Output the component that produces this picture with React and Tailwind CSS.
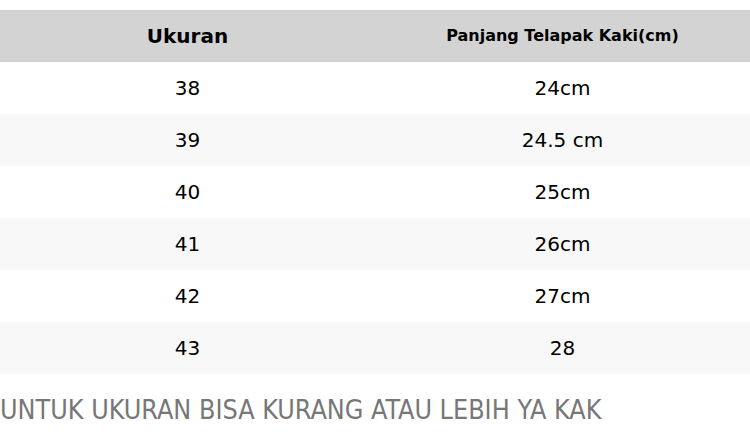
const rows = [
  ['38', '24cm'],
  ['39', '24.5 cm'],
  ['40', '25cm'],
  ['41', '26cm'],
  ['42', '27cm'],
  ['43', '28'],
];

export default function App() {
  return (
    <div className="w-[750px] h-[446px] bg-white text-black" style={{ fontFamily: '"DejaVu Sans", sans-serif' }}>
      <div className="pt-[10px]">
        <div className="grid grid-cols-2 h-[52px] bg-[#d3d3d3] font-bold items-center text-center">
          <div className="text-[20px]">Ukuran</div>
          <div className="text-[16px]">Panjang Telapak Kaki(cm)</div>
        </div>
        {rows.map(([size, len], i) => (
          <div
            key={size}
            className={`grid grid-cols-2 h-[52px] items-center text-center text-[20px] ${i % 2 === 1 ? 'bg-[#f8f8f8]' : 'bg-white'}`}
          >
            <div>{size}</div>
            <div>{len}</div>
          </div>
        ))}
      </div>
      <p
        className="mt-[20px] text-[26.7px] text-[#777] leading-[32px] font-[DejaVu_Sans_Condensed,sans-serif]"
      >
        UNTUK UKURAN BISA KURANG ATAU LEBIH YA KAK
      </p>
    </div>
  );
}
